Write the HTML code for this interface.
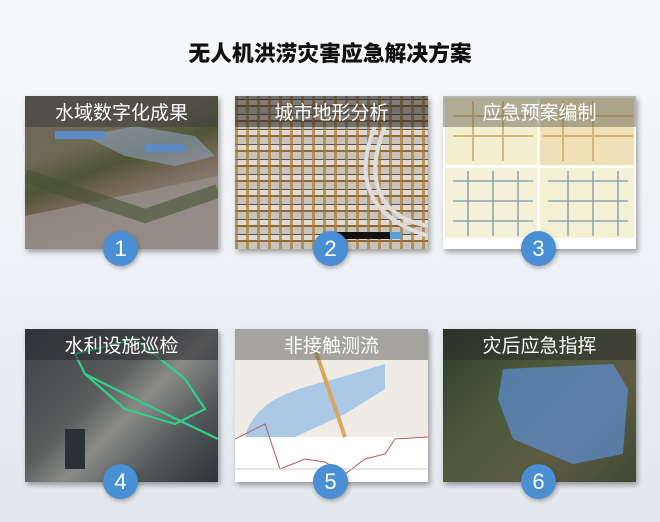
<!DOCTYPE html>
<html><head><meta charset="utf-8"><style>
html,body{margin:0;padding:0}
body{width:660px;height:522px;position:relative;overflow:hidden;background:linear-gradient(#f7f8fb,#eef1f5 50%,#e2e6ec);font-family:"Liberation Sans","Noto Sans CJK SC",sans-serif}
h1{position:absolute;top:40px;left:0;width:660px;text-align:center;margin:0;font-size:21.8px;line-height:26px;font-weight:900;color:#111;font-family:"Noto Sans CJK SC",sans-serif}
.card{position:absolute;width:193px;height:153px;overflow:hidden;box-shadow:2px 3px 5px rgba(0,0,0,.35)}
.bar{position:absolute;left:0;top:0;width:100%;height:31px;background:rgba(60,60,60,.55);color:#fff;text-align:center;font-size:19px;line-height:31px;font-family:"Noto Sans CJK SC",sans-serif}
.c{position:absolute;width:35px;height:35px;border-radius:50%;background:#4a8fd4;color:#fff;font-size:22px;line-height:35px;text-align:center;box-shadow:1px 2px 4px rgba(0,0,0,.3)}
</style></head><body>
<h1>无人机洪涝灾害应急解决方案</h1>

<div class="card" style="left:25px;top:96px;background:linear-gradient(160deg,#6b6558 0%,#6f6a55 30%,#4f5535 45%,#726451 55%,#8a7f78 70%,#958b86 100%)">
<svg width="193" height="153" style="position:absolute;left:0;top:0"><polygon points="0,120 193,80 193,153 0,153" fill="#968d88" opacity=".8"/><polygon points="60,40 110,30 170,40 190,60 150,70 100,60" fill="#8ea0b8" opacity=".6"/><rect x="30" y="35" width="50" height="8" fill="#5d8ac4"/><rect x="120" y="48" width="40" height="8" fill="#5d8ac4"/><path d="M0,80 L120,120 L193,95" stroke="#465232" stroke-width="14" fill="none" opacity=".6"/></svg>
<div class="bar">水域数字化成果</div></div>

<div class="card" style="left:235px;top:96px;background:repeating-linear-gradient(90deg,rgba(170,120,50,.7) 0 3px,transparent 3px 11px),repeating-linear-gradient(0deg,#c8c4bc 0 7px,#8a6b38 7px 9px,#dedad3 9px 14px,#5e5040 14px 15px)">
<svg width="193" height="153" style="position:absolute;left:0;top:0"><path d="M140,30 C120,80 130,120 193,140 M150,30 C130,80 140,120 193,130" stroke="#ddd" stroke-width="4" fill="none"/><rect x="90" y="136" width="75" height="7" fill="#111"/><rect x="155" y="136" width="12" height="7" fill="#5a9ee0"/></svg>
<div class="bar" style="background:rgba(30,30,30,.5)">城市地形分析</div></div>

<div class="card" style="left:443px;top:96px;background:#fff">
<div style="position:absolute;left:2px;top:2px;width:92px;height:67px;background:#f4efcf"></div>
<div style="position:absolute;left:97px;top:2px;width:94px;height:67px;background:#efe0b7"></div>
<div style="position:absolute;left:2px;top:72px;width:92px;height:70px;background:#f3f1d8"></div>
<div style="position:absolute;left:97px;top:72px;width:94px;height:70px;background:#f4f0d4"></div>
<svg width="193" height="153" style="position:absolute;left:0;top:0"><g stroke="#c9a35a" stroke-width="2" opacity=".7"><path d="M10,20H90M10,40H90M30,5V65M60,5V65M100,20H190M100,40H190M120,5V65M150,5V65"/></g><g stroke="#7e97a8" stroke-width="1.3"><path d="M10,85H90M10,105H90M10,125H90M25,75V140M50,75V140M75,75V140M105,85H185M105,105H185M105,125H185M125,75V140M150,75V140M175,75V140"/></g></svg>
<div class="bar" style="background:rgba(90,90,80,.45)">应急预案编制</div></div>

<div class="card" style="left:25px;top:329px;background:linear-gradient(135deg,#3c4046 0%,#5a5d5c 40%,#8a8b87 55%,#545a5c 75%,#2e3236 100%)">
<svg width="193" height="153" style="position:absolute;left:0;top:0"><g stroke="#2fd08a" stroke-width="2.2" fill="none"><path d="M50,25 L110,10 L160,50 L180,80 L150,95 L100,80 L60,45 Z"/><path d="M60,45 L120,75 L193,110"/></g><rect x="40" y="100" width="20" height="40" fill="#2a3035"/></svg>
<div class="bar" style="background:rgba(40,40,45,.55)">水利设施巡检</div></div>

<div class="card" style="left:235px;top:329px;background:#fff">
<div style="position:absolute;left:0;top:0;width:193px;height:108px;background:#efece6"></div>
<svg width="193" height="153" style="position:absolute;left:0;top:0"><path d="M10,108 C20,70 60,60 100,50 L150,35 L150,60 L110,85 L60,108Z" fill="#a9c9e6"/><path d="M80,20 L110,108" stroke="#d9a75b" stroke-width="4"/><path d="M0,110 L30,95 L45,140 L70,130 L90,133 L110,145 L130,130 L150,125 L160,110 L193,108" stroke="#b55b5b" stroke-width="1" fill="none"/><line x1="0" y1="140" x2="193" y2="140" stroke="#ccc"/></svg>
<div class="bar" style="background:rgba(90,90,90,.5)">非接触测流</div></div>

<div class="card" style="left:443px;top:329px;background:linear-gradient(135deg,#2f3d28,#4d5a3c 40%,#5e5a44 70%,#3d4a30)">
<svg width="193" height="153" style="position:absolute;left:0;top:0"><polygon points="60,40 170,35 185,60 180,125 130,135 70,110 55,70" fill="#5d8fd4" opacity=".7"/></svg>
<div class="bar" style="background:rgba(40,40,40,.5)">灾后应急指挥</div></div>

<div class="c" style="left:103px;top:231px">1</div>
<div class="c" style="left:313px;top:231px">2</div>
<div class="c" style="left:521px;top:231px">3</div>
<div class="c" style="left:103px;top:464px">4</div>
<div class="c" style="left:313px;top:464px">5</div>
<div class="c" style="left:521px;top:464px">6</div>
</body></html>
